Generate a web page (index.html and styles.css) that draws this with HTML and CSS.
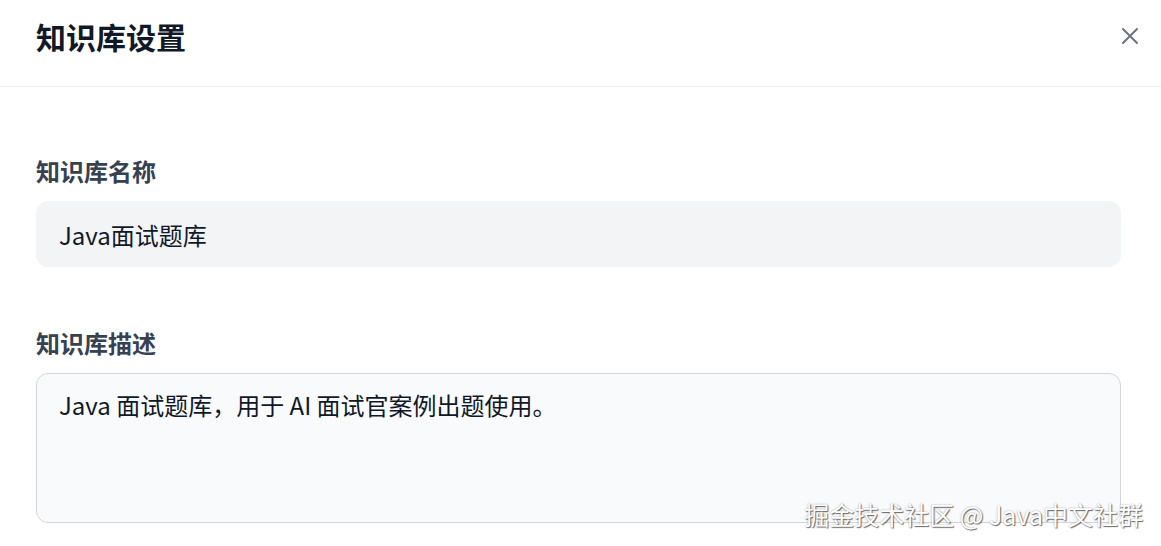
FILE: index.html
```html
<!DOCTYPE html>
<html lang="zh-CN">
<head>
<meta charset="utf-8">
<title>知识库设置</title>
<link rel="stylesheet" href="styles.css">
</head>
<body>
<div class="dialog">
  <header class="dialog-header">
    <h1 class="dialog-title">知识库设置</h1>
    <button class="close-btn" aria-label="关闭">
      <svg width="18" height="18" viewBox="0 0 18 18"><path d="M2 2L16 16M16 2L2 16" stroke="#6b7280" stroke-width="2" stroke-linecap="round" fill="none"/></svg>
    </button>
  </header>
  <div class="dialog-body">
    <div class="field">
      <label class="field-label">知识库名称</label>
      <input class="text-input" type="text" value="Java面试题库">
    </div>
    <div class="field">
      <label class="field-label">知识库描述</label>
      <textarea class="text-area">Java 面试题库，用于 AI 面试官案例出题使用。</textarea>
    </div>
  </div>
</div>
<div class="watermark">掘金技术社区 @ Java中文社群</div>
</body>
</html>
```

FILE: styles.css
```css
html, body {
  margin: 0;
  padding: 0;
  background: #ffffff;
  font-family: "Noto Sans CJK SC", "Noto Sans", sans-serif;
}
.dialog {
  width: 100%;
}
.dialog-header {
  display: flex;
  align-items: flex-start;
  justify-content: space-between;
  height: 87px;
  padding: 0 22px 0 36px;
  box-sizing: border-box;
  border-bottom: 1px solid #eceef1;
}
.dialog-title {
  margin: 18px 0 0;
  font-size: 30px;
  line-height: 36px;
  font-weight: 700;
  color: #111827;
}
.close-btn {
  margin-top: 27px;
  width: 18px;
  height: 18px;
  padding: 0;
  border: none;
  background: none;
  display: flex;
}
.dialog-body {
  padding: 68px 40px 0 36px;
  display: flex;
  flex-direction: column;
  gap: 60px;
}
.field {
  display: flex;
  flex-direction: column;
  gap: 14px;
}
.field-label {
  font-size: 24px;
  line-height: 32px;
  font-weight: 700;
  color: #374151;
}
.text-input {
  height: 66px;
  box-sizing: border-box;
  border: none;
  border-radius: 12px;
  background: #f3f4f6;
  padding: 0 23px;
  font-family: inherit;
  font-size: 24px;
  color: #111827;
  outline: none;
}
.text-area {
  height: 150px;
  box-sizing: border-box;
  border: 1px solid #d1d5db;
  border-radius: 12px;
  background: #f9fafb;
  padding: 15px 22px;
  font-family: inherit;
  font-size: 24px;
  line-height: 32px;
  color: #111827;
  resize: none;
  outline: none;
}
.watermark {
  position: absolute;
  right: 18px;
  top: 496px;
  font-size: 25px;
  line-height: 36px;
  color: #ffffff;
  text-shadow: 1px 1px 1px rgba(0,0,0,0.55), 0 0 2px rgba(0,0,0,0.35);
  font-family: "Noto Sans CJK SC", sans-serif;
  white-space: nowrap;
}
```
